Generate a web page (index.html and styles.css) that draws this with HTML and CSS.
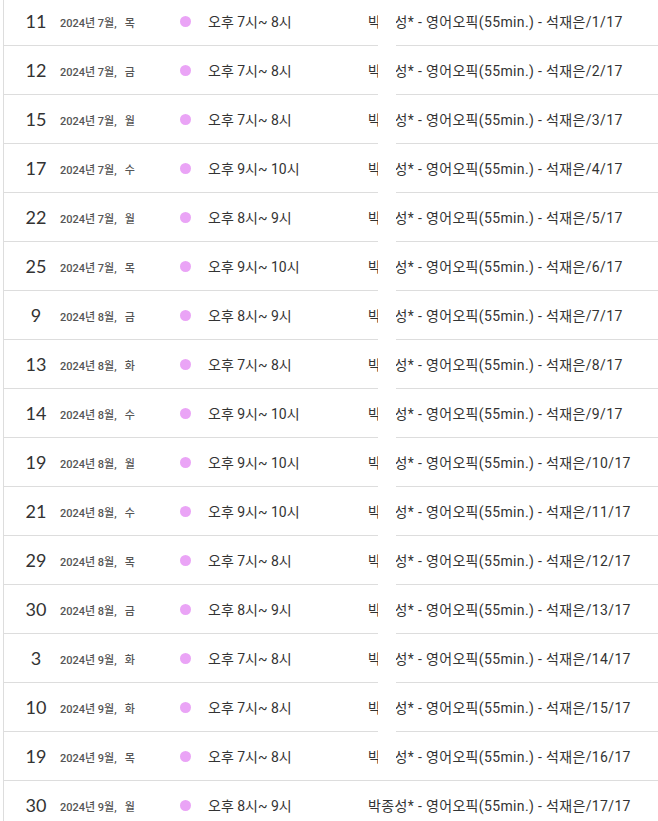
FILE: index.html
```html
<!DOCTYPE html>
<html lang="ko">
<head>
<meta charset="utf-8">
<title>일정 목록</title>
<link rel="stylesheet" href="styles.css">
</head>
<body>
<div class="page">
  <div class="mask"></div>
  <ul class="list">
    <li class="row"><span class="day">11</span><span class="date">2024년 7월,<span class="wd">목</span></span><span class="dot"></span><span class="time">오후 7시~ 8시</span><span class="title">박종성* - 영어오픽(55min.) - 석재은/1/17</span></li>
    <li class="row"><span class="day">12</span><span class="date">2024년 7월,<span class="wd">금</span></span><span class="dot"></span><span class="time">오후 7시~ 8시</span><span class="title">박종성* - 영어오픽(55min.) - 석재은/2/17</span></li>
    <li class="row"><span class="day">15</span><span class="date">2024년 7월,<span class="wd">월</span></span><span class="dot"></span><span class="time">오후 7시~ 8시</span><span class="title">박종성* - 영어오픽(55min.) - 석재은/3/17</span></li>
    <li class="row"><span class="day">17</span><span class="date">2024년 7월,<span class="wd">수</span></span><span class="dot"></span><span class="time">오후 9시~ 10시</span><span class="title">박종성* - 영어오픽(55min.) - 석재은/4/17</span></li>
    <li class="row"><span class="day">22</span><span class="date">2024년 7월,<span class="wd">월</span></span><span class="dot"></span><span class="time">오후 8시~ 9시</span><span class="title">박종성* - 영어오픽(55min.) - 석재은/5/17</span></li>
    <li class="row"><span class="day">25</span><span class="date">2024년 7월,<span class="wd">목</span></span><span class="dot"></span><span class="time">오후 9시~ 10시</span><span class="title">박종성* - 영어오픽(55min.) - 석재은/6/17</span></li>
    <li class="row"><span class="day">9</span><span class="date">2024년 8월,<span class="wd">금</span></span><span class="dot"></span><span class="time">오후 8시~ 9시</span><span class="title">박종성* - 영어오픽(55min.) - 석재은/7/17</span></li>
    <li class="row"><span class="day">13</span><span class="date">2024년 8월,<span class="wd">화</span></span><span class="dot"></span><span class="time">오후 7시~ 8시</span><span class="title">박종성* - 영어오픽(55min.) - 석재은/8/17</span></li>
    <li class="row"><span class="day">14</span><span class="date">2024년 8월,<span class="wd">수</span></span><span class="dot"></span><span class="time">오후 9시~ 10시</span><span class="title">박종성* - 영어오픽(55min.) - 석재은/9/17</span></li>
    <li class="row"><span class="day">19</span><span class="date">2024년 8월,<span class="wd">월</span></span><span class="dot"></span><span class="time">오후 9시~ 10시</span><span class="title">박종성* - 영어오픽(55min.) - 석재은/10/17</span></li>
    <li class="row"><span class="day">21</span><span class="date">2024년 8월,<span class="wd">수</span></span><span class="dot"></span><span class="time">오후 9시~ 10시</span><span class="title">박종성* - 영어오픽(55min.) - 석재은/11/17</span></li>
    <li class="row"><span class="day">29</span><span class="date">2024년 8월,<span class="wd">목</span></span><span class="dot"></span><span class="time">오후 7시~ 8시</span><span class="title">박종성* - 영어오픽(55min.) - 석재은/12/17</span></li>
    <li class="row"><span class="day">30</span><span class="date">2024년 8월,<span class="wd">금</span></span><span class="dot"></span><span class="time">오후 8시~ 9시</span><span class="title">박종성* - 영어오픽(55min.) - 석재은/13/17</span></li>
    <li class="row"><span class="day">3</span><span class="date">2024년 9월,<span class="wd">화</span></span><span class="dot"></span><span class="time">오후 7시~ 8시</span><span class="title">박종성* - 영어오픽(55min.) - 석재은/14/17</span></li>
    <li class="row"><span class="day">10</span><span class="date">2024년 9월,<span class="wd">화</span></span><span class="dot"></span><span class="time">오후 7시~ 8시</span><span class="title">박종성* - 영어오픽(55min.) - 석재은/15/17</span></li>
    <li class="row"><span class="day">19</span><span class="date">2024년 9월,<span class="wd">목</span></span><span class="dot"></span><span class="time">오후 7시~ 8시</span><span class="title">박종성* - 영어오픽(55min.) - 석재은/16/17</span></li>
    <li class="row"><span class="day">30</span><span class="date">2024년 9월,<span class="wd">월</span></span><span class="dot"></span><span class="time">오후 8시~ 9시</span><span class="title">박종성* - 영어오픽(55min.) - 석재은/17/17</span></li>
  </ul>
</div>
</body>
</html>
```
FILE: styles.css
```css
html, body {
  margin: 0;
  padding: 0;
  overflow: hidden;
  background: #fff;
}

body {
  font-family: Roboto, "Noto Sans CJK KR", sans-serif;
  color: #333;
}

.page {
  position: relative;
}

.mask {
  position: absolute;
  left: 378px;
  top: 0;
  width: 18px;
  height: 781px;
  background: #fff;
  z-index: 2;
}

.list {
  list-style: none;
  margin: -3px 0 0 3px;
  padding: 0;
  border-left: 1px solid #ddd;
}

.row {
  display: grid;
  grid-template-columns: 44px 120px 28px 160px 1fr;
  align-items: center;
  height: 48px;
  padding-left: 12px;
  border-bottom: 1px solid #ddd;
  white-space: nowrap;
}

.day {
  font-family: Lato, "Noto Sans CJK KR", sans-serif;
  font-size: 18px;
  color: #333;
  text-align: center;
  padding-right: 4px;
}

.date {
  font-family: Roboto, "Noto Sans CJK KR", sans-serif;
  font-size: 11px;
  font-weight: 500;
  color: #555;
  padding-top: 2px;
}

.wd {
  margin-left: 8px;
}

.dot {
  width: 11px;
  height: 11px;
  border-radius: 50%;
  background: #eaa4f6;
}

.time {
  font-size: 14px;
  color: #333;
}

.title {
  font-size: 14px;
  letter-spacing: 0.35px;
  color: #333;
}
```
